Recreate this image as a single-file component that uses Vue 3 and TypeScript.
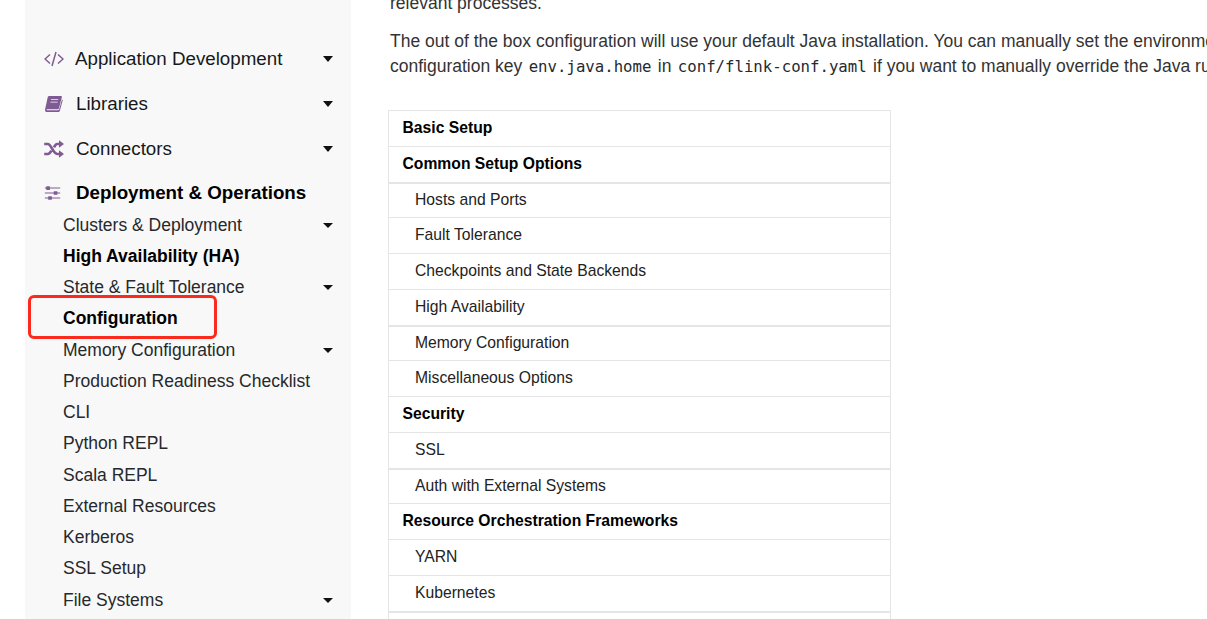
<script setup lang="ts">
interface SubItem {
  label: string
  caret?: boolean
  bold?: boolean
}

interface TocRow {
  label: string
  head?: boolean
  thick?: boolean
}

const topItems = [
  { label: 'Application Development', icon: 'code' },
  { label: 'Libraries', icon: 'book' },
  { label: 'Connectors', icon: 'random' },
]

const subItems: SubItem[] = [
  { label: 'Clusters & Deployment', caret: true },
  { label: 'High Availability (HA)', bold: true },
  { label: 'State & Fault Tolerance', caret: true },
  { label: 'Configuration', bold: true },
  { label: 'Memory Configuration', caret: true },
  { label: 'Production Readiness Checklist' },
  { label: 'CLI' },
  { label: 'Python REPL' },
  { label: 'Scala REPL' },
  { label: 'External Resources' },
  { label: 'Kerberos' },
  { label: 'SSL Setup' },
  { label: 'File Systems', caret: true },
]

const tocRows: TocRow[] = [
  { label: 'Basic Setup', head: true },
  { label: 'Common Setup Options', head: true },
  { label: 'Hosts and Ports', thick: true },
  { label: 'Fault Tolerance' },
  { label: 'Checkpoints and State Backends' },
  { label: 'High Availability' },
  { label: 'Memory Configuration', thick: true },
  { label: 'Miscellaneous Options' },
  { label: 'Security', head: true },
  { label: 'SSL' },
  { label: 'Auth with External Systems', thick: true },
  { label: 'Resource Orchestration Frameworks', head: true },
  { label: 'YARN' },
  { label: 'Kubernetes' },
  { label: '', thick: true },
]
</script>

<template>
  <div class="page">
    <aside class="sidebar">
      <nav class="nav">
        <div v-for="item in topItems" :key="item.label" class="top-row">
          <svg v-if="item.icon === 'code'" class="icon code" viewBox="0 0 20 20" fill="none" stroke="#7f5b93" stroke-width="1.5">
            <path d="M6 5.500 1 10l5 4.500M14 5.500l5 4.500-5 4.500M12 3 8 17" />
          </svg>
          <svg v-else-if="item.icon === 'book'" class="icon book" viewBox="0 0 20 20" fill="#7f5b93">
            <path d="M5.600 1.500h12.200c.9 0 1.200.7 1 1.500l-3 11.200c-.2.8-.8 1.300-1.600 1.300H3.600c-.9 0-1.300.8-.5 1.200h11.600c.7 0 1-.2 1.200-.8l3-10.700.9.500-3.200 11.700c-.2.800-.9 1.100-1.700 1.100H3.200C1.700 18.500.8 17.400 1.100 15.800L3.900 3c.2-.9.800-1.500 1.700-1.500Z" />
            <path d="M7.500 5h7.500l-.2.800H7.300ZM6.900 7.500h7.500l-.2.800H6.700Z" fill="#f8f8f8" />
          </svg>
          <svg v-else class="icon" viewBox="0 0 20 20" fill="none" stroke="#7f5b93" stroke-width="2.700">
            <path d="M.2 5h3.600c3.400 0 5.400 10 9.400 10h2.800M.2 15h3.600c1.500 0 2.600-1.500 3.600-3.400M10 8.400C10.900 6.500 11.900 5 13.200 5h2.800" />
            <path d="M15 1.300 20 5l-5 3.700ZM15 11.300l5 3.700-5 3.700Z" fill="#7f5b93" stroke="none" />
          </svg>
          <span class="top-label">{{ item.label }}</span>
          <i class="caret" />
        </div>

        <div class="top-row active">
          <svg class="icon small" viewBox="0 0 20 20" fill="#7f5b93">
            <path d="M1 3.600h18v1.200H1ZM1 9.400h18v1.200H1ZM1 15.200h18v1.200H1Z" />
            <path d="M3.200 2.200h3.200c.4 0 .6.200.6.600v3c0 .4-.2.600-.6.600H3.200c-.4 0-.6-.2-.6-.6v-3c0-.4.200-.6.600-.6ZM12 8h3.200c.4 0 .6.200.6.600v3c0 .4-.2.600-.6.600H12c-.4 0-.6-.2-.6-.6v-3c0-.4.200-.6.600-.6ZM5.500 13.800h3.200c.4 0 .6.200.6.600v3c0 .4-.2.600-.6.600H5.500c-.4 0-.6-.2-.6-.6v-3c0-.4.200-.6.600-.6Z" />
          </svg>
          <span class="top-label">Deployment &amp; Operations</span>
        </div>

        <ul class="sub-list">
          <li v-for="sub in subItems" :key="sub.label" :class="{ bold: sub.bold }">
            <span>{{ sub.label }}</span>
            <i v-if="sub.caret" class="caret" />
          </li>
        </ul>
      </nav>
      <div class="highlight" />
    </aside>

    <main class="content">
      <p class="clipped">relevant processes.</p>
      <p class="para">
        The out of the box configuration will use your default Java installation. You can manually set the environment variable<br />
        configuration key <code>env.java.home</code> in <code>conf/flink-conf.yaml</code> if you want to manually override the Java runtime to use.
      </p>
      <div class="toc">
        <div
          v-for="(row, i) in tocRows"
          :key="i"
          class="toc-row"
          :class="{ head: row.head, thick: row.thick }"
        >
          {{ row.label }}
        </div>
      </div>
    </main>
  </div>
</template>

<style>
html,
body {
  margin: 0;
  overflow: hidden;
  background: #fff;
}
</style>

<style scoped>
.page {
  display: flex;
  width: 1207px;
  height: 619px;
  overflow: hidden;
  font-family: 'Liberation Sans', Arial, sans-serif;
  color: #212529;
}

.sidebar {
  position: relative;
  flex: none;
  width: 326px;
  height: 619px;
  margin-left: 25px;
  background: #f8f8f8;
  overflow: hidden;
}

.nav {
  padding: 36px 18px 0 19px;
}

.top-row {
  display: flex;
  align-items: center;
  height: 45px;
  font-size: 18.75px;
  color: #16181b;
}

.top-row.active {
  height: 43px;
  font-weight: 700;
  color: #000;
}

.icon {
  flex: none;
  width: 20px;
  height: 20px;
  margin-right: 12px;
}

.icon.code {
  margin-right: 11px;
}

.icon.book {
  width: 19px;
  margin-right: 13px;
}

.icon.small {
  width: 17px;
  height: 18px;
  margin-right: 15px;
}

.top-label {
  flex: 1;
}

.caret {
  flex: none;
  width: 0;
  height: 0;
  border-top: 6px solid #111;
  border-left: 5.5px solid transparent;
  border-right: 5.5px solid transparent;
}

.sub-list {
  margin: -4.4px 0 0;
  padding: 0 0 0 19px;
  list-style: none;
}

.sub-list li {
  display: flex;
  align-items: center;
  justify-content: space-between;
  height: 31.25px;
  font-size: 17.5px;
  color: #26292c;
}

.sub-list li.bold {
  font-weight: 700;
  color: #000;
}

.sub-list .caret {
  border-top-width: 5px;
  border-left-width: 5px;
  border-right-width: 5px;
}

.highlight {
  position: absolute;
  left: 3px;
  top: 295px;
  width: 189px;
  height: 44px;
  box-sizing: border-box;
  border: 3.5px solid #fb2a1f;
  border-radius: 6px;
}

.content {
  flex: 1;
  min-width: 0;
  padding-left: 37px;
  font-size: 17.5px;
  color: #333;
  white-space: nowrap;
  overflow: hidden;
}

.content p {
  margin: 0;
  line-height: 25px;
}

.clipped {
  margin-top: -9px !important;
  padding-left: 2px;
}

.para {
  margin-top: 13px !important;
  padding-left: 2px;
}

code {
  padding: 0 1.5px;
  font-family: 'DejaVu Sans Mono', monospace;
  font-size: 15.7px;
  color: #24292e;
}

.toc {
  width: 503px;
  margin-top: 31px;
  box-sizing: border-box;
  border: 1px solid #e5e5e5;
  border-bottom: 0;
}

.toc-row {
  height: 35.75px;
  box-sizing: border-box;
  padding-left: 26px;
  border-bottom: 1px solid #e5e5e5;
  font-size: 15.7px;
  line-height: 34.95px;
  color: #222;
}

.toc-row.head {
  padding-left: 13.5px;
  font-weight: 700;
  color: #000;
}

.toc-row.thick {
  border-top: 1px solid #e5e5e5;
  line-height: 32px;
}
</style>
